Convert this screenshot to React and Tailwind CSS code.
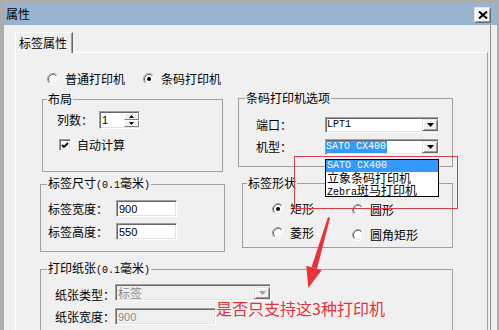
const sunken =
  "border border-t-[#a0a0a0] border-l-[#a0a0a0] border-r-white border-b-white shadow-[inset_1px_1px_0_#696969,inset_-1px_-1px_0_#e3e3e3]";
const raised =
  "border border-t-[#e3e3e3] border-l-[#e3e3e3] border-r-[#696969] border-b-[#696969] shadow-[inset_1px_1px_0_#fff,inset_-1px_-1px_0_#a0a0a0]";
const half = "font-['Liberation_Mono',monospace] text-[10px]";
const group = "border border-[#a0a0a0] min-w-0";

function Radio({ checked }) {
  return (
    <svg width="12" height="12" viewBox="0 0 12 12" className="shrink-0">
      <circle cx="6" cy="6" r="4.5" fill="#fff" />
      <path d="M2.11 9.89A5.5 5.5 0 0 1 9.89 2.11" fill="none" stroke="#a0a0a0" />
      <path d="M9.89 2.11A5.5 5.5 0 0 1 2.11 9.89" fill="none" stroke="#ffffff" />
      <path d="M2.82 9.18A4.5 4.5 0 0 1 9.18 2.82" fill="none" stroke="#696969" />
      <path d="M9.18 2.82A4.5 4.5 0 0 1 2.82 9.18" fill="none" stroke="#e3e3e3" />
      {checked && <circle cx="6" cy="6" r="2" fill="#000" />}
    </svg>
  );
}

function DropButton({ disabled }) {
  return (
    <div className={"ml-auto w-[16px] h-[12px] bg-[#f0f0f0] flex items-center justify-center " + raised}>
      <svg width="7" height="4" viewBox="0 0 7 4">
        <path d="M0 0H7L3.5 4Z" fill={disabled ? "#a0a0a0" : "#000"} />
      </svg>
    </div>
  );
}

function Legend({ children, ml }) {
  return <legend className={"px-[1px] leading-[14px] " + ml}>{children}</legend>;
}

export default function App() {
  return (
    <div className="relative w-[499px] h-[330px] overflow-hidden bg-[#f0f0f0] border-l-[4px] border-t-[3px] border-r-[2px] border-[#acacac] font-['Noto_Sans_CJK_SC',sans-serif] text-[12px] leading-[14px] text-black">
      {/* title bar */}
      <div className="h-[22px] bg-[#99b4d1] flex items-center pl-[2px] pr-[6px]">
        <span>属性</span>
        <div className={"ml-auto mt-[2px] w-[17px] h-[16px] bg-[#f4f4f4] flex items-center justify-center " + raised}>
          <svg width="10" height="8" viewBox="0 0 10 8">
            <path d="M1 0.5L9 7.5M9 0.5L1 7.5" stroke="#000" strokeWidth="2" />
          </svg>
        </div>
      </div>

      <div className="w-[487px] h-[305px] border-r border-r-[#8a8a8a] pt-[7px]">
        {/* tab */}
        <div className="relative z-10 ml-[11px] -mb-[1px] w-[58px] h-[21px] bg-[#f0f0f0] border-t border-l border-white border-r border-r-[#696969] shadow-[inset_-1px_0_0_#a0a0a0] flex items-center pl-[3px]">
          标签属性
        </div>

        {/* tab panel */}
        <div className="ml-[11px] w-[473px] h-[290px] border-t border-l border-white border-r border-r-[#a0a0a0]">
          <div className="mt-[19px] pl-[31px] h-[14px] flex items-center">
            <Radio />
            <span className="ml-[6px]">普通打印机</span>
            <span className="ml-[18px]"><Radio checked /></span>
            <span className="ml-[6px]">条码打印机</span>
          </div>

          <div className="mt-[5px] pl-[24px] flex">
            {/* left column */}
            <div className="w-[185px] flex flex-col">
              <fieldset className={"ml-[2px] mt-[1px] w-[181px] h-[80px] " + group}>
                <Legend ml="ml-[4px]">布局</Legend>
                <div className="mt-[5px] pl-[14px] h-[18px] flex items-center">
                  <span className="w-[42px]">列数：</span>
                  <div className={"w-[41px] h-[18px] bg-white flex items-center " + sunken}>
                    <span className="pl-[2px] font-['Liberation_Sans',sans-serif] text-[11px]">1</span>
                    <div className="ml-auto flex flex-col">
                      <div className="w-[15px] h-[7px] bg-[#f0f0f0] border border-t-white border-l-white border-r-[#808080] border-b-[#808080] flex items-center justify-center">
                        <svg width="5" height="3" viewBox="0 0 5 3"><path d="M2.5 0L5 3H0Z" fill="#000" /></svg>
                      </div>
                      <div className="w-[15px] h-[7px] bg-[#f0f0f0] border border-t-white border-l-white border-r-[#808080] border-b-[#808080] flex items-center justify-center">
                        <svg width="5" height="3" viewBox="0 0 5 3"><path d="M0 0H5L2.5 3Z" fill="#000" /></svg>
                      </div>
                    </div>
                  </div>
                </div>
                <div className="mt-[10px] pl-[16px] h-[12px] flex items-center">
                  <div className={"w-[12px] h-[12px] bg-white flex items-center justify-center " + sunken}>
                    <svg width="8" height="7" viewBox="0 0 8 7">
                      <path d="M1 3L3 5L7 1" fill="none" stroke="#000" strokeWidth="1.8" />
                    </svg>
                  </div>
                  <span className="ml-[6px]">自动计算</span>
                </div>
              </fieldset>

              <fieldset className={"mt-[4px] w-[185px] h-[76px] " + group}>
                <Legend ml="ml-[6px]">
                  标签尺寸<span className={half}>(0.1</span>毫米<span className={half}>)</span>
                </Legend>
                <div className="mt-[7px] pl-[7px] h-[17px] flex items-center">
                  <span className="w-[68px]">标签宽度：</span>
                  <div className={"w-[61px] h-[17px] bg-white flex items-center pl-[2px] font-['Liberation_Sans',sans-serif] text-[11px] " + sunken}>900</div>
                </div>
                <div className="mt-[6px] pl-[7px] h-[17px] flex items-center">
                  <span className="w-[68px]">标签高度：</span>
                  <div className={"w-[61px] h-[17px] bg-white flex items-center pl-[2px] font-['Liberation_Sans',sans-serif] text-[11px] " + sunken}>550</div>
                </div>
              </fieldset>
            </div>

            {/* right column */}
            <div className="ml-[13px] w-[215px] flex flex-col">
              <fieldset className={"w-[215px] h-[76px] " + group}>
                <Legend ml="ml-[6px]">条码打印机选项</Legend>
                <div className="mt-[12px] pl-[17px] h-[16px] flex items-center">
                  <span className="w-[69px]">端口：</span>
                  <div className={"w-[114px] h-[16px] bg-white flex items-center " + sunken}>
                    <span className={"pl-[1px] leading-[12px] " + half}>LPT1</span>
                    <DropButton />
                  </div>
                </div>
                <div className="mt-[6px] pl-[17px] h-[16px] flex items-center">
                  <span className="w-[69px]">机型：</span>
                  <div className={"w-[114px] h-[16px] bg-white flex items-center " + sunken}>
                    <span className={"h-[12px] leading-[12px] bg-[#3399ff] text-white pr-[1px] " + half}>SATO CX400</span>
                    <DropButton />
                  </div>
                </div>
              </fieldset>

              <fieldset className={"mt-[9px] ml-[4px] w-[211px] h-[72px] " + group}>
                <Legend ml="ml-[4px]">标签形状</Legend>
                <div className="mt-[12px] pl-[29px] h-[14px] flex">
                  <div className="w-[80px] flex items-center">
                    <Radio checked />
                    <span className="ml-[6px]">矩形</span>
                  </div>
                  <div className="mt-[2px] flex items-center">
                    <Radio />
                    <span className="ml-[6px]">圆形</span>
                  </div>
                </div>
                <div className="mt-[10px] pl-[29px] h-[14px] flex">
                  <div className="w-[80px] flex items-center">
                    <Radio />
                    <span className="ml-[6px]">菱形</span>
                  </div>
                  <div className="mt-[3px] flex items-center">
                    <Radio />
                    <span className="ml-[6px]">圆角矩形</span>
                  </div>
                </div>
              </fieldset>
            </div>
          </div>

          <fieldset className={"mt-[9px] ml-[24px] w-[413px] h-[110px] " + group}>
            <Legend ml="ml-[6px]">
              打印纸张<span className={half}>(0.1</span>毫米<span className={half}>)</span>
            </Legend>
            <div className="mt-[6px] pl-[14px] h-[17px] flex items-center">
              <span className="w-[60px] pt-[4px]">纸张类型：</span>
              <div className={"w-[156px] h-[17px] bg-[#f0f0f0] flex items-center text-[#8a8a8a] " + sunken}>
                <span className="pl-[2px]">标签</span>
                <DropButton disabled />
              </div>
            </div>
            <div className="mt-[7px] pl-[14px] h-[17px] flex items-center">
              <span className="w-[60px]">纸张宽度：</span>
              <div className={"w-[101px] h-[17px] bg-[#f0f0f0] flex items-center pl-[2px] text-[#8a8a8a] font-['Liberation_Sans',sans-serif] text-[11px] " + sunken}>900</div>
            </div>
            <div className="mt-[6px] pl-[14px] h-[17px] flex items-center">
              <span className="w-[60px]" />
              <div className={"w-[101px] h-[17px] bg-[#f0f0f0] " + sunken} />
            </div>
          </fieldset>
        </div>
      </div>

      {/* open drop list */}
      <div className="absolute left-[321px] top-[156px] w-[114px] h-[38px] border border-black bg-white flex flex-col">
        <div className={"h-[12px] leading-[12px] bg-[#3399ff] text-white pl-[1px] " + half}>SATO CX400</div>
        <div className="h-[12px] leading-[12px] pl-[1px]">立象条码打印机</div>
        <div className="h-[12px] leading-[12px] pl-[1px]">
          <span className={half}>Zebra</span>斑马打印机
        </div>
      </div>

      {/* annotation */}
      <div className="absolute left-[290px] top-[153px] w-[164px] h-[53px] border border-[#dc3c48]" />
      <svg className="absolute left-[296px] top-[211px]" width="35" height="80" viewBox="0 0 35 80">
        <path d="M28 3L30 4L17 55L11.5 53.3Z" fill="#e8323c" />
        <path d="M6.3 51.7L21.7 56.3L8.3 74Z" fill="#e8323c" />
      </svg>
      <div className="absolute left-[212px] top-[296px] text-[16px] leading-[18px] text-[#e6323e] whitespace-nowrap">
        是否只支持这3种打印机
      </div>
    </div>
  );
}
